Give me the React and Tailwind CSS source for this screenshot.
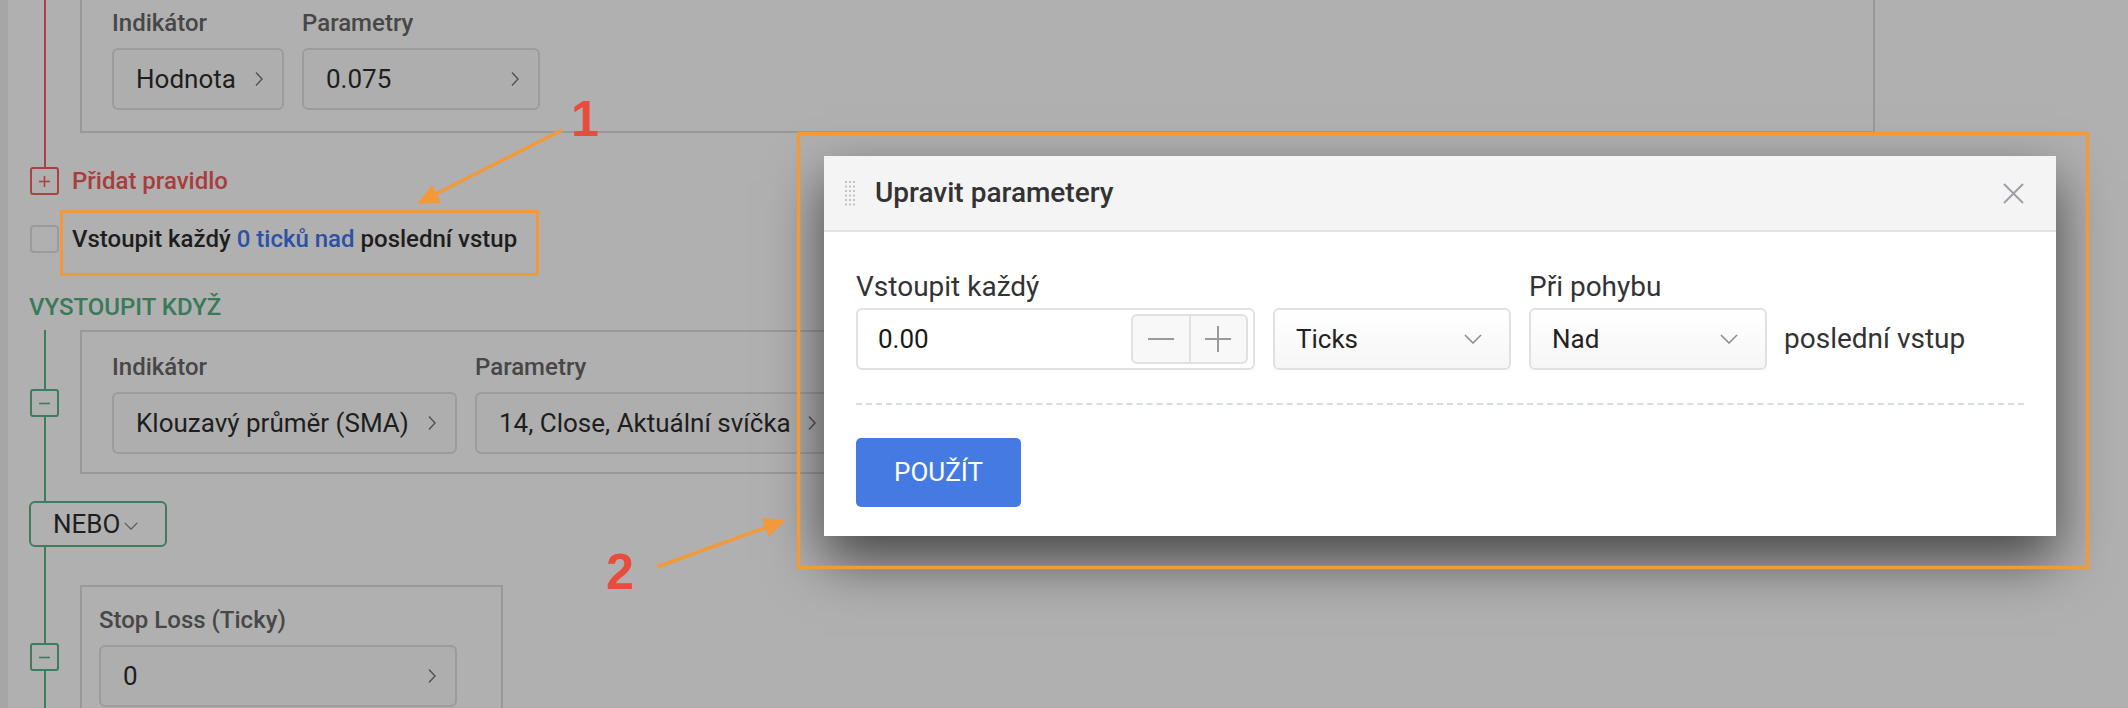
import React from 'react';

const ChevronRight = ({ color = '#555' }) => (
  <svg width="10" height="16" viewBox="0 0 10 16" className="shrink-0">
    <path d="M2 1.5l6 6.5-6 6.5" stroke={color} strokeWidth="1.5" fill="none" />
  </svg>
);

const ChevronDown = ({ w = 18, color = '#8a8a8a' }) => (
  <svg width={w} height={w / 2 + 1} viewBox="0 0 18 10" className="shrink-0">
    <path d="M1 1l8 8 8-8" stroke={color} strokeWidth="1.5" fill="none" />
  </svg>
);

const DragHandle = () => (
  <svg width="10" height="25" viewBox="0 0 10 25" className="shrink-0">
    {[1, 5.5, 10, 14.5, 19, 23.5].map((y) =>
      [1, 5, 9].map((x) => <rect key={`${x}-${y}`} x={x - 1} y={y - 1} width="2" height="2" fill="#c2c2c2" />)
    )}
  </svg>
);

const Field = ({ label, value, width }) => (
  <div className={width}>
    <div className="text-[24px] leading-[28px] font-medium text-[#474747] mb-[11px] whitespace-nowrap">{label}</div>
    <div className="h-[62px] border-2 border-[#9c9c9c] rounded-[6px] bg-[#aeaeae] flex items-center justify-between pl-[22px] pr-[18px] text-[26px] text-[#1e1e1e] whitespace-nowrap overflow-hidden">
      <span>{value}</span>
      <ChevronRight />
    </div>
  </div>
);

const SquareIcon = ({ color, sign }) => (
  <div className={`w-[29px] h-[28px] border-2 rounded-[3px] bg-[#b0b0b0] flex items-center justify-center ${color}`}>
    <svg width="13" height="13" viewBox="0 0 13 13">
      <path d="M1 6.5h11" stroke="currentColor" strokeWidth="1.6" />
      {sign === '+' && <path d="M6.5 1v11" stroke="currentColor" strokeWidth="1.6" />}
    </svg>
  </div>
);

const Select = ({ value }) => (
  <div className="w-[238px] h-[62px] border-2 border-[#e1e1e1] rounded-[6px] bg-gradient-to-b from-white to-[#f6f6f6] flex items-center justify-between pl-[21px] pr-[27px] text-[26px] text-[#222]">
    <span>{value}</span>
    <ChevronDown />
  </div>
);

const Annotations = () => (
  <svg className="absolute inset-0 pointer-events-none" width="2128" height="708" viewBox="0 0 2128 708">
    <rect x="61.5" y="211.5" width="476" height="63" fill="none" stroke="#f2993a" strokeWidth="3" />
    <line x1="562" y1="130" x2="432" y2="196" stroke="#f2993a" strokeWidth="3.5" />
    <polygon points="417,204 441.1,202.9 432.1,185.1" fill="#f2993a" />
    <text x="585" y="136" textAnchor="middle" fontFamily="'Liberation Sans', Arial, sans-serif" fontWeight="700" fontSize="50" fill="#e84c3d">1</text>

    <rect x="798.5" y="133.5" width="1289" height="434" fill="none" stroke="#f2993a" strokeWidth="3.5" />
    <line x1="657" y1="567" x2="770" y2="526" stroke="#f2993a" strokeWidth="3.5" />
    <polygon points="786,520 768.7,536.9 761.9,518.1" fill="#f2993a" />
    <text x="620" y="589" textAnchor="middle" fontFamily="'Liberation Sans', Arial, sans-serif" fontWeight="700" fontSize="50" fill="#e84c3d">2</text>
  </svg>
);

const Modal = () => (
  <div className="absolute left-[824px] top-[156px] w-[1232px] bg-white shadow-[0_24px_52px_rgba(0,0,0,0.6)]">
    <div className="h-[76px] bg-[#f4f4f4] border-b-2 border-[#e2e2e2] flex items-center pl-[21px] pr-[32px]">
      <DragHandle />
      <div className="ml-[20px] text-[28px] font-medium text-[#333]">Upravit parametery</div>
      <svg className="ml-auto" width="21" height="21" viewBox="0 0 21 21">
        <path d="M1 1l19 19M20 1L1 20" stroke="#9ca0a5" strokeWidth="2" />
      </svg>
    </div>

    <div className="px-[32px] pt-[39px] pb-[29px]">
      <div className="flex items-end gap-[18px]">
        <div>
          <div className="text-[28px] leading-[32px] text-[#333] mb-[5px]">Vstoupit každý</div>
          <div className="w-[399px] h-[62px] border-2 border-[#e1e1e1] rounded-[6px] flex items-center pl-[20px] pr-[5px]">
            <span className="flex-1 text-[26px] text-[#1a1a1a]">0.00</span>
            <div className="w-[117px] h-[50px] border-2 border-[#e1e1e1] rounded-[6px] bg-[#f8f8f8] flex">
              <div className="flex-1 flex items-center justify-center border-r-2 border-[#e1e1e1]">
                <svg width="26" height="2" viewBox="0 0 26 2"><path d="M0 1h26" stroke="#9a9a9a" strokeWidth="2" /></svg>
              </div>
              <div className="flex-1 flex items-center justify-center">
                <svg width="26" height="26" viewBox="0 0 26 26"><path d="M0 13h26M13 0v26" stroke="#9a9a9a" strokeWidth="2" /></svg>
              </div>
            </div>
          </div>
        </div>
        <Select value="Ticks" />
        <div>
          <div className="text-[28px] leading-[32px] text-[#333] mb-[5px]">Při pohybu</div>
          <Select value="Nad" />
        </div>
        <div className="h-[62px] flex items-center text-[28px] text-[#333] -ml-[1px]">poslední vstup</div>
      </div>

      <div className="mt-[33px] border-t-2 border-dashed border-[#d6dce2]" />

      <button className="mt-[33px] w-[165px] h-[69px] rounded-[5px] bg-[#457ae2] text-white text-[26px] flex items-center justify-center">
        POUŽÍT
      </button>
    </div>
  </div>
);

export default function App() {
  return (
    <div className="relative w-[2128px] h-[708px] overflow-hidden bg-[#b0b0b0] font-['Roboto',sans-serif]">
      <div className="flex h-full">
        <div className="w-[8px] shrink-0 bg-[#a6a6a6]" />
        <div className="flex-1">
          {/* entry rules */}
          <div className="relative pl-[72px] pb-[34px]">
            <div className="absolute left-[36px] top-0 bottom-0 w-[2px] bg-[#a84444]" />
            <div className="w-[1795px] -mt-[13px] border-2 border-[#999] pl-[30px] pt-[20px] pb-[21px] flex gap-[18px]">
              <Field label="Indikátor" value="Hodnota" width="w-[172px]" />
              <Field label="Parametry" value="0.075" width="w-[238px]" />
            </div>
          </div>

          <div className="flex items-center h-[28px] pl-[22px]">
            <SquareIcon color="border-[#a84444] text-[#a84444]" sign="+" />
            <span className="ml-[13px] text-[24px] font-medium text-[#a63e3e]">Přidat pravidlo</span>
          </div>

          <div className="flex items-center h-[28px] mt-[30px] pl-[22px]">
            <div className="w-[29px] h-[28px] border-2 border-[#9a9a9a] rounded-[4px]" />
            <span className="ml-[13px] text-[24px] font-medium text-[#1e1e1e] whitespace-nowrap">
              Vstoupit každý <span className="text-[#2d51a6]">0 ticků nad</span> poslední vstup
            </span>
          </div>

          <div className="mt-[40px] pl-[21px] text-[24px] leading-[28px] font-medium text-[#387a59]">VYSTOUPIT KDYŽ</div>

          {/* exit rules */}
          <div className="relative mt-[9px]">
            <div className="absolute left-[36px] top-0 bottom-0 w-[2px] bg-[#3d7d5e]" />
            <div className="relative flex">
              <div className="w-[72px] shrink-0 pl-[22px] pt-[59px]">
                <SquareIcon color="border-[#3d7d5e] text-[#3d7d5e]" sign="-" />
              </div>
              <div className="w-[1795px] border-2 border-[#999] pl-[30px] pt-[21px] pb-[18px] flex gap-[18px]">
                <Field label="Indikátor" value="Klouzavý průměr (SMA)" width="w-[345px]" />
                <Field label="Parametry" value="14, Close, Aktuální svíčka" width="w-[362px]" />
              </div>
            </div>

            <div className="relative mt-[27px] ml-[21px] w-[138px] h-[46px] border-2 border-[#3d7d5e] rounded-[6px] bg-[#b0b0b0] flex items-center pl-[22px] text-[26px] text-[#1e1e1e]">
              NEBO
              <span className="ml-[4px] mt-[4px]"><ChevronDown w={14} color="#555" /></span>
            </div>

            <div className="relative flex mt-[38px]">
              <div className="w-[72px] shrink-0 pl-[22px] pt-[58px]">
                <SquareIcon color="border-[#3d7d5e] text-[#3d7d5e]" sign="-" />
              </div>
              <div className="w-[423px] border-2 border-[#999] pl-[17px] pt-[19px] pb-[20px]">
                <Field label="Stop Loss (Ticky)" value="0" width="w-[358px]" />
              </div>
            </div>
          </div>
        </div>
      </div>

      <Modal />
      <Annotations />
    </div>
  );
}
